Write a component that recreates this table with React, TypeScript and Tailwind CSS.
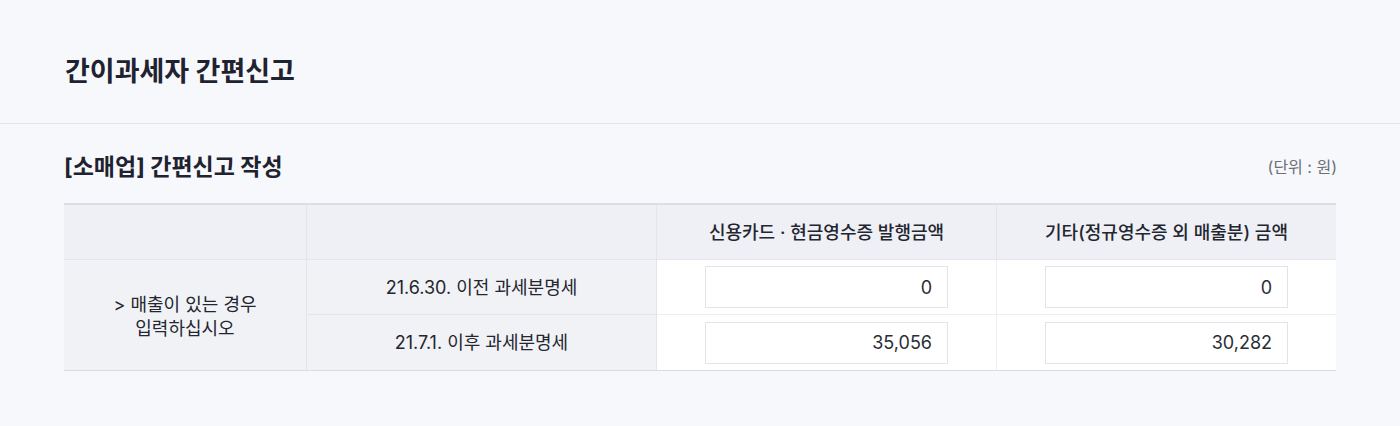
const FONT = "font-['Inter','Noto_Sans_CJK_KR',sans-serif]"

function AmountInput({ value }: { value: string }) {
  return (
    <div className="flex h-[42px] w-[243px] items-center justify-end border border-[#e2e4e8] bg-white pr-[15px] text-[18px] text-[#2a2d35]">
      {value}
    </div>
  )
}

const rows = [
  { label: "21.6.30. 이전 과세분명세", card: "0", etc: "0" },
  { label: "21.7.1. 이후 과세분명세", card: "35,056", etc: "30,282" },
]

export default function App() {
  return (
    <div className={`min-h-screen bg-[#f7f8fb] text-[#23262f] ${FONT}`}>
      <div className="h-[124px] border-b border-[#e2e4e9] px-[65px] pt-[55px]">
        <h1 className="text-[27px] leading-[34px] font-bold text-[#1f2330]">
          간이과세자 간편신고
        </h1>
      </div>

      <div className="px-[64px]">
        <div className="mt-[28px] flex items-center justify-between">
          <h2 className="text-[23px] leading-[30px] font-bold text-[#1f2330]">
            [소매업] 간편신고 작성
          </h2>
          <span className="mr-[-1px] text-[16px] text-[#6b6f78]">(단위 : 원)</span>
        </div>

        <div className="mt-[21px] grid grid-cols-[243px_350px_340px_1fr] border-t-2 border-b border-t-[#dcdee4] border-b-[#dadce2] text-[18px]">
          {/* header */}
          <div className="h-[55px] border-r border-b border-[#e3e5ea] bg-[#eff0f5]" />
          <div className="h-[55px] border-r border-b border-[#e3e5ea] bg-[#eff0f5]" />
          <div className="flex h-[55px] items-center justify-center border-r border-b border-[#e3e5ea] bg-[#eff0f5] text-[18px] font-medium">
            신용카드 · 현금영수증 발행금액
          </div>
          <div className="flex h-[55px] items-center justify-center border-b border-[#e3e5ea] bg-[#eff0f5] text-[18px] font-medium">
            기타(정규영수증 외 매출분) 금액
          </div>

          {/* body */}
          <div className="row-span-2 flex items-center justify-center border-r border-[#e3e5ea] bg-[#f1f2f6] pt-[4px] text-center leading-[24px]">
            <p>
              &gt; 매출이 있는 경우
              <br />
              입력하십시오
            </p>
          </div>
          {rows.map((r, i) => (
            <div key={r.label} className="contents">
              <div
                className={`flex h-[55px] items-center justify-center border-r border-[#e3e5ea] bg-[#f1f2f6] ${i === 0 ? "border-b" : ""}`}
              >
                {r.label}
              </div>
              <div
                className={`flex h-[55px] items-center justify-center border-r border-[#eceef1] bg-white ${i === 0 ? "border-b" : ""}`}
              >
                <AmountInput value={r.card} />
              </div>
              <div
                className={`flex h-[55px] items-center justify-center border-[#eceef1] bg-white ${i === 0 ? "border-b" : ""}`}
              >
                <AmountInput value={r.etc} />
              </div>
            </div>
          ))}
        </div>
      </div>
    </div>
  )
}
